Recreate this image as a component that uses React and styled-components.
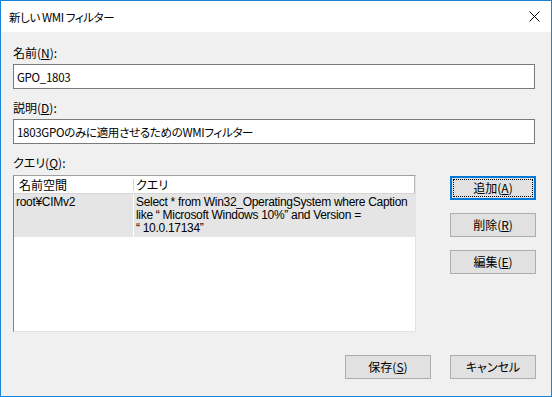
import React from "react";
import styled, { createGlobalStyle } from "styled-components";

const GlobalStyle = createGlobalStyle`
    html, body {
        margin: 0;
        padding: 0;
        background: #ffffff;
    }
    * {
        box-sizing: border-box;
    }
`;

const uiFont = `"Noto Sans CJK JP", "Liberation Sans", sans-serif`;
const listFont = `"Liberation Sans", "Noto Sans CJK JP", sans-serif`;

const Window = styled.div`
    width: 552px;
    height: 397px;
    border: 1px solid #1883d7;
    background: #f0f0f0;
    display: flex;
    flex-direction: column;
    font-family: ${uiFont};
    font-size: 12px;
    color: #000;
    font-feature-settings: "palt";
`;

const TitleBar = styled.div`
    height: 31px;
    background: #fff;
    display: flex;
    align-items: center;
    justify-content: space-between;
    padding: 0 11px 0 8px;
`;

const Title = styled.span`
    font-size: 11.5px;
    letter-spacing: -0.4px;
    line-height: 16px;
`;

const Body = styled.div`
    flex: 1;
    display: flex;
    flex-direction: column;
    padding: 13px 15px 0 12px;
`;

const Field = styled.div`
    display: flex;
    flex-direction: column;
    margin-bottom: 11px;
`;

const Label = styled.label`
    line-height: 16px;
    margin-bottom: ${({ $mb }) => $mb || 3}px;
`;

const U = styled.span`
    text-decoration: underline;
`;

const TextBox = styled.div`
    height: 25px;
    margin-right: 1px;
    background: #fff;
    border: 1px solid #7a7a7a;
    padding: 0 3px;
    display: flex;
    align-items: center;
    font-size: 11.5px;
    letter-spacing: -0.3px;
    line-height: 16px;
`;

const Middle = styled.div`
    display: flex;
    justify-content: space-between;
`;

const ListBox = styled.div`
    width: 403px;
    height: 157px;
    background: #fff;
    border-top: 1px solid #a0a0a0;
    border-left: 1px solid #828282;
    border-right: 1px solid #e3e3e3;
    border-bottom: 1px solid #e3e3e3;
    font-family: ${listFont};
`;

const HeaderRow = styled.div`
    display: grid;
    grid-template-columns: 120px 1fr;
    height: 18px;
    border-bottom: 1px solid #d5d5d5;
    font-family: ${uiFont};
`;

const HeaderCell = styled.div`
    position: relative;
    padding-left: ${({ $pl }) => $pl}px;
    line-height: 17px;
    border-right: ${({ $edge }) => ($edge ? "1px solid #b8b8b8" : "none")};

    &::after {
        content: "";
        display: ${({ $sep }) => ($sep ? "block" : "none")};
        position: absolute;
        right: 0;
        top: 3px;
        height: 12px;
        width: 1px;
        background: #d5d5d5;
    }
`;

const Row = styled.div`
    display: grid;
    grid-template-columns: 120px 1fr;
    letter-spacing: -0.3px;
`;

const Cell = styled.div`
    background: #e5e5e5;
    padding: 2px 2px 2px ${({ $pl }) => $pl}px;
    line-height: 13px;
    border-right: ${({ $split }) => ($split ? "1px solid #fff" : "none")};
`;

const ButtonColumn = styled.div`
    display: flex;
    flex-direction: column;
    gap: 13px;
    padding-top: 1px;
`;

const Button = styled.button`
    position: relative;
    width: 86px;
    height: 24px;
    padding: 0;
    background: #e1e1e1;
    border: ${({ $focused }) =>
        $focused ? "2px solid #0078d7" : "1px solid #adadad"};
    font-family: ${uiFont};
    font-size: 12px;
    color: #000;
    font-feature-settings: "palt";
    line-height: 16px;

    &::after {
        content: "";
        display: ${({ $focused }) => ($focused ? "block" : "none")};
        position: absolute;
        inset: 1px;
        border: 1px dotted #000;
    }
`;

const Footer = styled.div`
    display: flex;
    justify-content: flex-end;
    gap: 19px;
    margin-top: 23px;
`;

const CloseIcon = () => (
    <svg width="11" height="11" viewBox="0 0 11 11">
        <path d="M0.5 0.5 L10.5 10.5 M10.5 0.5 L0.5 10.5" stroke="#000" strokeWidth="1" />
    </svg>
);

const App = () => {
    return (
        <>
            <GlobalStyle />
            <Window>
                <TitleBar>
                    <Title>新しい WMI フィルター</Title>
                    <CloseIcon />
                </TitleBar>
                <Body>
                    <Field>
                        <Label>
                            名前(<U>N</U>):
                        </Label>
                        <TextBox>GPO_1803</TextBox>
                    </Field>
                    <Field>
                        <Label>
                            説明(<U>D</U>):
                        </Label>
                        <TextBox>1803GPOのみに適用させるためのWMIフィルター</TextBox>
                    </Field>
                    <Label $mb={4}>
                        クエリ(<U>Q</U>):
                    </Label>
                    <Middle>
                        <ListBox>
                            <HeaderRow>
                                <HeaderCell $pl={5} $sep>
                                    名前空間
                                </HeaderCell>
                                <HeaderCell $pl={2} $edge>
                                    クエリ
                                </HeaderCell>
                            </HeaderRow>
                            <Row>
                                <Cell $pl={2} $split>
                                    root¥CIMv2
                                </Cell>
                                <Cell $pl={2}>
                                    {"Select * from Win32_OperatingSystem where Caption like \u201c\u00a0Microsoft Windows 10%\u201d and Version = \u201c\u00a010.0.17134\u201d"}
                                </Cell>
                            </Row>
                        </ListBox>
                        <ButtonColumn>
                            <Button $focused>
                                追加(<U>A</U>)
                            </Button>
                            <Button>
                                削除(<U>R</U>)
                            </Button>
                            <Button>
                                編集(<U>E</U>)
                            </Button>
                        </ButtonColumn>
                    </Middle>
                    <Footer>
                        <Button>
                            保存(<U>S</U>)
                        </Button>
                        <Button>キャンセル</Button>
                    </Footer>
                </Body>
            </Window>
        </>
    );
};

export default App;
